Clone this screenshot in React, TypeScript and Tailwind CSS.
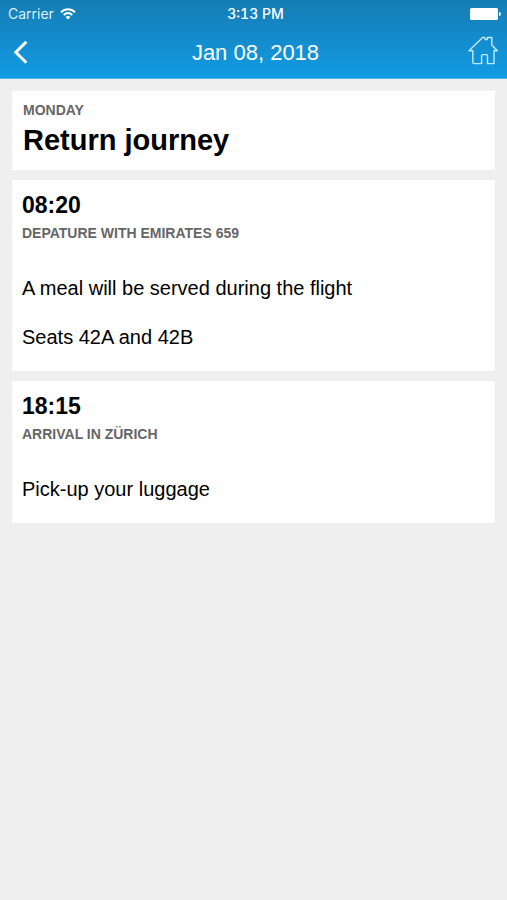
import React from 'react';

interface Entry {
  time: string;
  title: string;
  notes: string[];
}

const entries: Entry[] = [
  {
    time: '08:20',
    title: 'Depature with Emirates 659',
    notes: ['A meal will be served during the flight', 'Seats 42A and 42B'],
  },
  {
    time: '18:15',
    title: 'Arrival in Zürich',
    notes: ['Pick-up your luggage'],
  },
];

function StatusBar() {
  return (
    <div className="grid grid-cols-3 items-center h-7 pl-2 pr-1 font-['Inter',sans-serif] text-sm leading-7">
      <div className="flex items-center gap-[6px] text-[#d9f1fc]">
        <span>Carrier</span>
        <svg width="16" height="12" viewBox="0 0 16 12" fill="none" stroke="white" strokeWidth="2">
          <path d="M1 4.3C5 .3 11 .3 15 4.3" />
          <path d="M3.7 7C6.3 4.5 9.7 4.5 12.3 7" />
          <path d="M8 11.6 5.5 9.1Q8 7 10.5 9.1Z" fill="white" stroke="none" />
        </svg>
      </div>
      <span className="text-center font-medium tabular-nums">3:13 PM</span>
      <svg className="justify-self-end" width="33" height="12" viewBox="0 0 33 12" fill="white">
        <rect x="0" y="0" width="28" height="12" rx="1.5" />
        <path d="M29 4h.6Q31 4.500 31 6T29.600 8H29z" />
      </svg>
    </div>
  );
}

function Header() {
  return (
    <header className="bg-gradient-to-b from-[#157db3] to-[#119be4] text-white border-b border-[#55b4e4]">
      <StatusBar />
      <div className="flex items-center justify-between h-[50px] pl-3 pr-2">
        <button aria-label="Back" className="flex w-8 h-10">
          <svg className="mt-[6px]" width="18" height="26" viewBox="0 0 18 26" fill="none" stroke="currentColor" strokeWidth="3">
            <path d="M14.300 2.700 3.800 13.200 14.300 23.800" />
          </svg>
        </button>
        <h1 className="text-[22px] leading-7">Jan 08, 2018</h1>
        <button aria-label="Home" className="flex justify-end w-8 h-10">
          <svg className="mt-[3px]" width="32" height="30" viewBox="0 0 32 30" fill="none" stroke="#c3ecff" strokeWidth="1.400" strokeLinejoin="round">
            <path d="M2 14.700 15.600 1.500H17.500L18.200 3.600H20.200V1.500H24.800V9L30.300 14.700H27V27.600H20.500V19.600Q20.500 18.600 19.500 18.600H15.600Q14.600 18.600 14.600 19.600V27.600H7.200Q5.800 27.600 5.800 26.200V14.700Z" />
          </svg>
        </button>
      </div>
    </header>
  );
}

export default function App() {
  return (
    <div className="min-h-screen bg-[#efefef] font-['Liberation_Sans',Arial,sans-serif] text-black">
      <Header />
      <main className="flex flex-col gap-[10px] px-3 pt-3">
        <section className="bg-white px-[11px] pt-[9px] pb-[10px]">
          <p className="text-sm leading-5 font-bold uppercase text-[#666]">Monday</p>
          <h2 className="text-[29px] leading-10 font-bold">Return journey</h2>
        </section>

        {entries.map((entry) => (
          <section key={entry.time} className="bg-white px-[10px] pt-[10px] pb-[22px]">
            <h3 className="text-[23px] leading-[30px] font-bold">{entry.time}</h3>
            <p className="mt-[3px] text-sm leading-5 font-bold uppercase text-[#666]">{entry.title}</p>
            <div className="flex flex-col gap-[25px] mt-[33px]">
              {entry.notes.map((note) => (
                <p key={note} className="text-xl leading-6">{note}</p>
              ))}
            </div>
          </section>
        ))}
      </main>
    </div>
  );
}
